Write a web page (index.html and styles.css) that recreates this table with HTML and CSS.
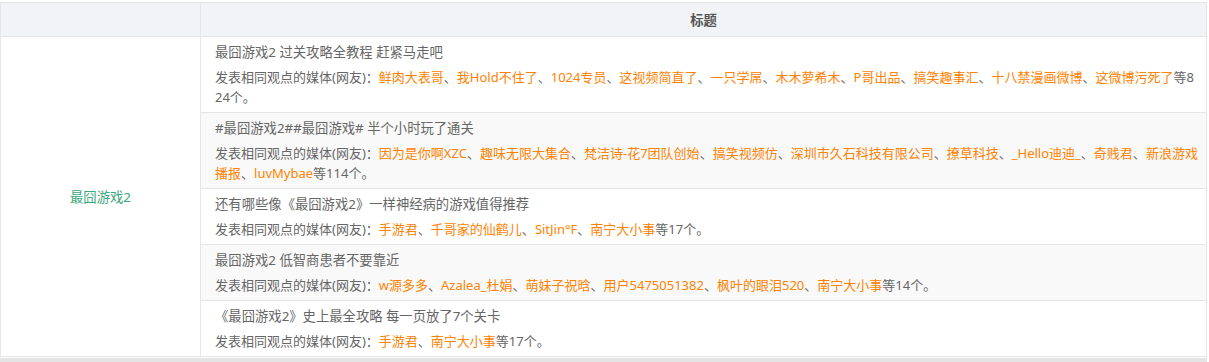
FILE: index.html
```html
<!DOCTYPE html>
<html lang="zh-CN">
<head>
<meta charset="utf-8">
<title>标题</title>
<link rel="stylesheet" href="styles.css">
</head>
<body>
<div class="wrap">
<table class="tbl">
  <thead>
    <tr><th class="c-key"></th><th class="c-title">标题</th></tr>
  </thead>
  <tbody>
    <tr>
      <td class="c-key" rowspan="5"><span class="kw">最囧游戏2</span></td>
      <td class="c-title">
        <p class="t">最囧游戏2 过关攻略全教程 赶紧马走吧</p>
        <p class="m">发表相同观点的媒体(网友)：<a>鲜肉大表哥</a>、<a>我Hold不住了</a>、<a>1024专员</a>、<a>这视频简直了</a>、<a>一只学屌</a>、<a>木木萝希木</a>、<a>P哥出品</a>、<a>搞笑趣事汇</a>、<a>十八禁漫画微博</a>、<a>这微博污死了</a>等8<br>24个。</p>
      </td>
    </tr>
    <tr class="alt">
      <td class="c-title">
        <p class="t">#最囧游戏2##最囧游戏# 半个小时玩了通关</p>
        <p class="m">发表相同观点的媒体(网友)：<a>因为是你啊XZC</a>、<a>趣味无限大集合</a>、<a>梵洁诗-花7团队创始</a>、<a>搞笑视频仿</a>、<a>深圳市久石科技有限公司</a>、<a>撩草科技</a>、<a>_Hello迪迪_</a>、<a>奇贱君</a>、<a>新浪游戏<br>播报</a>、<a>luvMybae</a>等114个。</p>
      </td>
    </tr>
    <tr>
      <td class="c-title">
        <p class="t">还有哪些像《最囧游戏2》一样神经病的游戏值得推荐</p>
        <p class="m">发表相同观点的媒体(网友)：<a>手游君</a>、<a>千哥家的仙鹤儿</a>、<a>SitJin°F</a>、<a>南宁大小事</a>等17个。</p>
      </td>
    </tr>
    <tr class="alt">
      <td class="c-title">
        <p class="t">最囧游戏2 低智商患者不要靠近</p>
        <p class="m">发表相同观点的媒体(网友)：<a>w源多多</a>、<a>Azalea_杜娟</a>、<a>萌妹子祝晗</a>、<a>用户5475051382</a>、<a>枫叶的眼泪520</a>、<a>南宁大小事</a>等14个。</p>
      </td>
    </tr>
    <tr>
      <td class="c-title">
        <p class="t">《最囧游戏2》史上最全攻略 每一页放了7个关卡</p>
        <p class="m">发表相同观点的媒体(网友)：<a>手游君</a>、<a>南宁大小事</a>等17个。</p>
      </td>
    </tr>
  </tbody>
</table>
<div class="bar"></div>
</div>
</body>
</html>
```

FILE: styles.css
```css
html, body {
  margin: 0;
  padding: 0;
  background: #fff;
}
body {
  font-family: "Noto Sans", "Noto Sans CJK SC", "Microsoft YaHei", sans-serif;
  font-size: 13.33px;
  color: #666;
}
.wrap {
  padding-top: 2px;
  width: 1207px;
}
.tbl {
  width: 1207px;
  border-collapse: collapse;
  table-layout: fixed;
}
.tbl th, .tbl td {
  border: 1px solid #e6e6e6;
}
.tbl thead th {
  height: 33px;
  padding: 0;
  background: #f2f3f7;
  color: #555;
  font-weight: bold;
  font-size: 13.33px;
}
.tbl th.c-key { width: 199px; }
.tbl td.c-key {
  text-align: center;
  vertical-align: middle;
  background: #fff;
}
.kw { color: #3aa87a; }
.tbl td.c-title {
  padding: 5px 3px 5px 14px;
  vertical-align: top;
  word-break: break-all;
}
.alt td.c-title { background: #f9f9f9; }
.t, .m {
  margin: 0;
  line-height: 20px;
}
.t { margin-bottom: 5px; }
.m { font-size: 13px; }
.m a { color: #ff8200; text-decoration: none; }
.bar {
  height: 6px;
  background: #e4e4e4;
  margin-top: 1px;
}
```
